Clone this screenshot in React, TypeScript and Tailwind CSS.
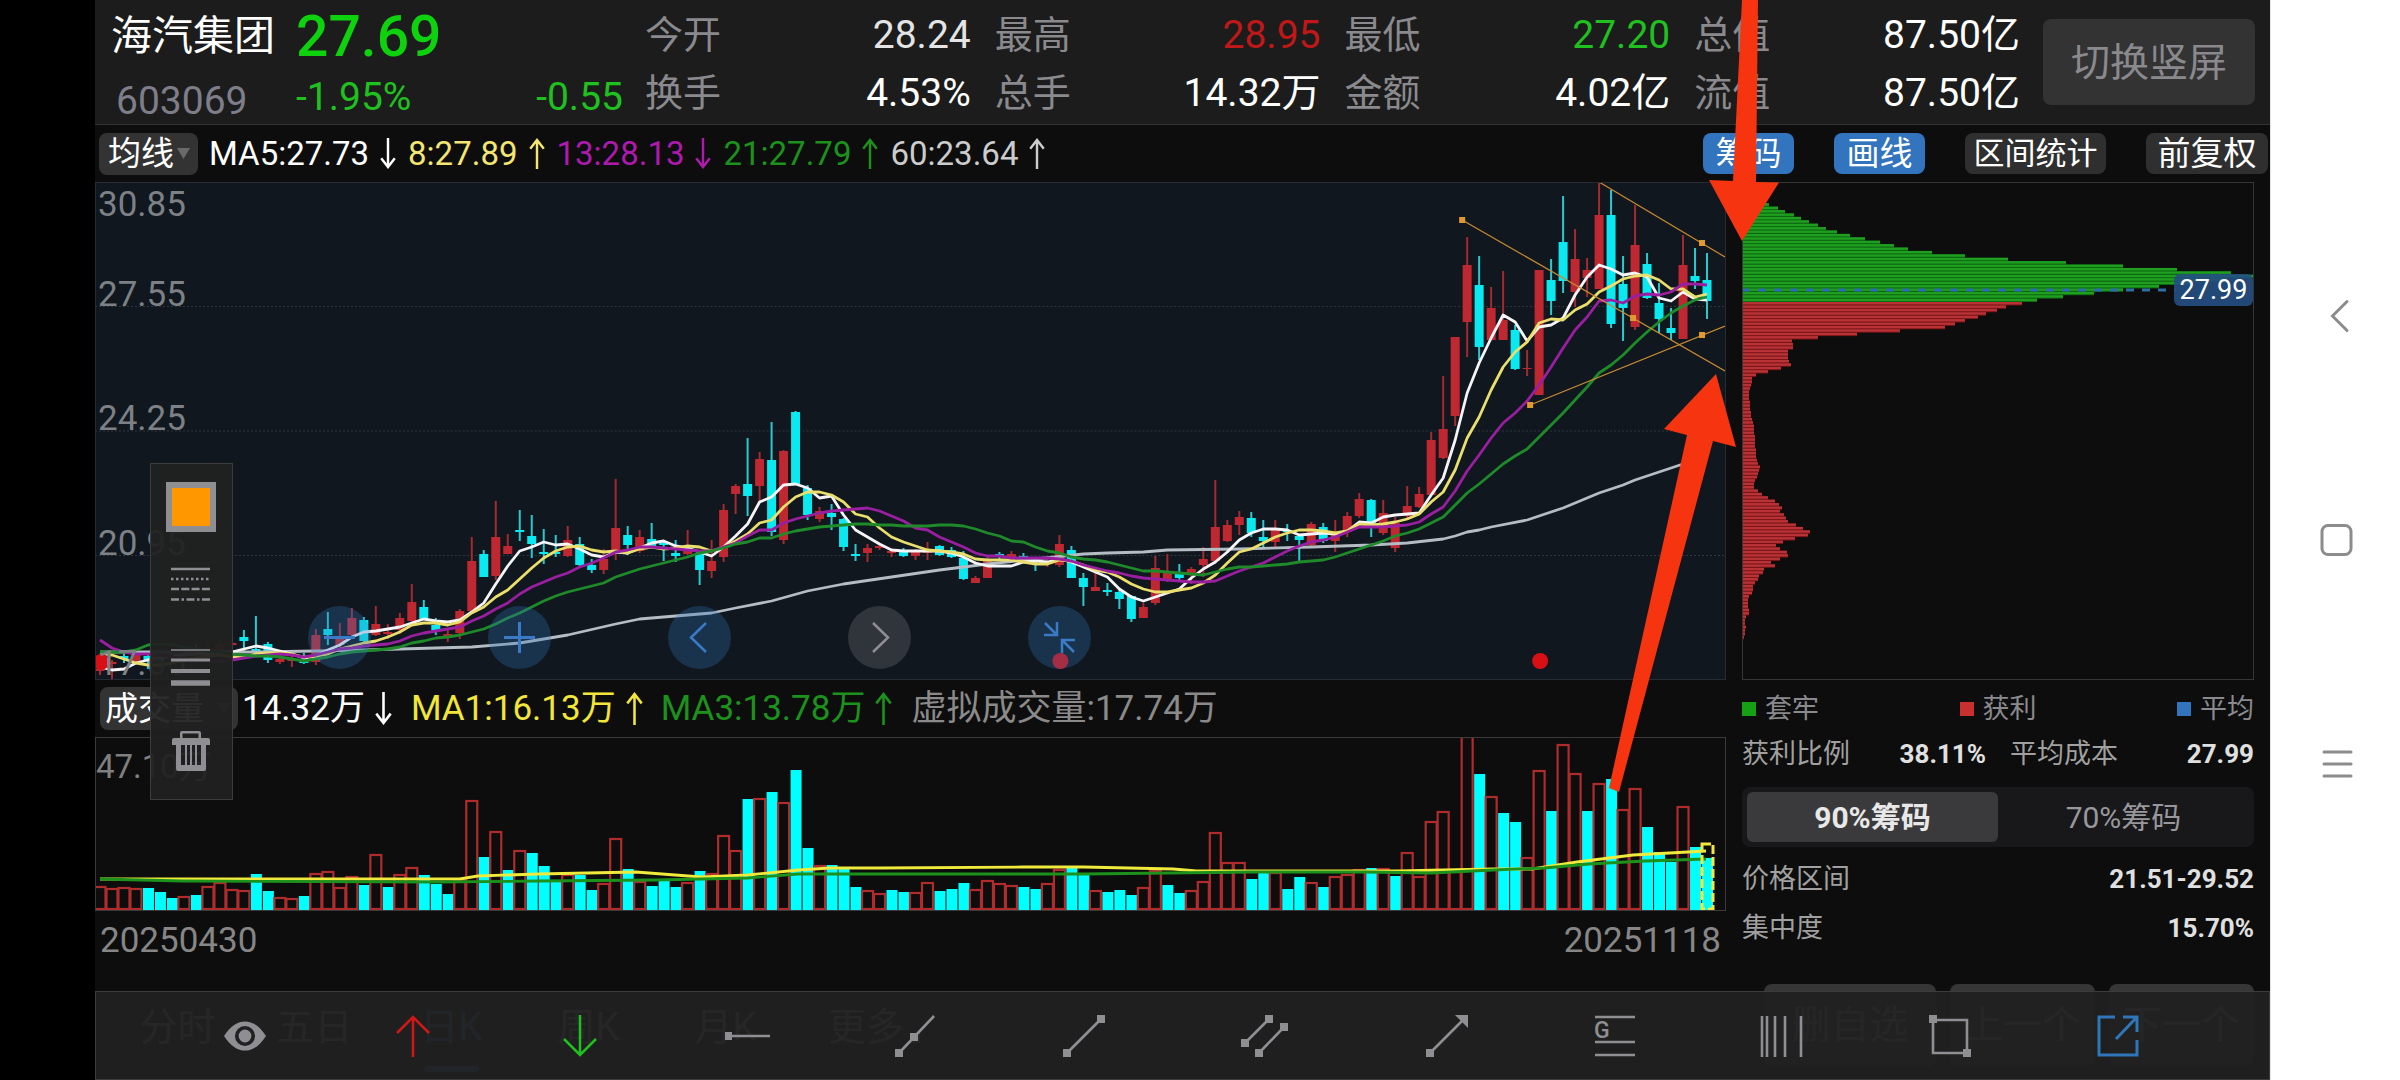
"use client";

import { useState } from "react";

interface Candle {
    up: boolean;
    high: number;
    top: number;
    bottom: number;
    low: number;
}

interface Quote {
    label: string;
    value: string;
    color: string;
}

// distance between two trading days on the x axis
const STEP = 12;
const FIRST_X = 5;

const UP = "#bf2830";
const DOWN = "#0be9f0";

// direction (1 up, 0 down), high, body top, body bottom, low
const candleRows: number[][] = [
    [1, 481, 487, 489, 493], [1, 478, 480, 482, 498], [0, 471, 474, 477, 481], [1, 470, 472, 480, 480], [0, 471, 474, 479, 487],
    [0, 470, 476, 480, 486], [1, 466, 470, 478, 480], [1, 464, 468, 474, 478], [0, 462, 466, 472, 480], [1, 460, 466, 474, 478],
    [1, 458, 462, 468, 470], [1, 457, 461, 463, 466], [0, 448, 455, 459, 471], [0, 434, 467, 469, 469], [0, 460, 462, 478, 481],
    [1, 473, 477, 480, 482], [1, 473, 477, 479, 485], [0, 471, 479, 481, 482], [1, 447, 453, 480, 483], [0, 430, 447, 453, 463],
    [1, 441, 454, 463, 465], [1, 426, 436, 453, 455], [0, 435, 438, 459, 460], [1, 424, 442, 453, 454], [1, 442, 450, 452, 457],
    [1, 431, 436, 448, 452], [1, 402, 420, 439, 440], [0, 418, 425, 437, 438], [0, 436, 443, 448, 453], [1, 448, 452, 454, 460],
    [1, 427, 429, 451, 457], [1, 355, 379, 429, 431], [0, 368, 372, 395, 395], [1, 319, 355, 394, 398], [1, 352, 364, 372, 372],
    [0, 328, 348, 350, 359], [0, 333, 354, 362, 376], [0, 347, 370, 372, 382], [0, 353, 370, 372, 375], [1, 344, 358, 374, 375],
    [0, 355, 362, 383, 385], [0, 377, 383, 388, 391], [1, 367, 377, 388, 392], [1, 297, 346, 368, 378], [0, 344, 353, 363, 373],
    [1, 348, 355, 369, 371], [0, 341, 357, 365, 366], [0, 359, 361, 363, 379], [0, 358, 371, 374, 380], [1, 348, 366, 372, 373],
    [0, 370, 371, 388, 403], [1, 358, 379, 389, 396], [1, 322, 328, 375, 380], [1, 302, 304, 312, 332], [0, 256, 302, 314, 334],
    [1, 270, 277, 304, 320], [0, 240, 278, 350, 354], [1, 268, 269, 358, 362], [0, 229, 230, 302, 302], [0, 303, 306, 333, 338],
    [1, 325, 329, 337, 340], [0, 322, 331, 335, 348], [0, 336, 337, 365, 369], [0, 362, 372, 374, 379], [1, 362, 366, 371, 380],
    [1, 361, 364, 366, 368], [1, 366, 369, 371, 375], [0, 366, 369, 374, 375], [1, 367, 369, 374, 378], [1, 360, 367, 371, 378],
    [0, 363, 364, 373, 374], [0, 365, 368, 375, 376], [0, 369, 376, 397, 398], [1, 394, 396, 401, 401], [1, 375, 378, 396, 396],
    [0, 370, 372, 374, 378], [1, 369, 372, 375, 378], [0, 371, 374, 376, 378], [0, 376, 378, 380, 389], [1, 376, 379, 381, 385],
    [1, 353, 362, 383, 385], [0, 364, 368, 396, 396], [0, 391, 396, 405, 424], [1, 391, 405, 409, 409], [0, 401, 408, 410, 414],
    [0, 407, 410, 417, 427], [0, 413, 414, 437, 440], [1, 421, 425, 436, 436], [1, 374, 386, 421, 423], [1, 372, 390, 399, 400],
    [0, 382, 390, 396, 398], [1, 385, 387, 391, 402], [1, 365, 377, 383, 395], [1, 298, 345, 379, 382], [1, 338, 343, 359, 360],
    [1, 329, 335, 343, 353], [0, 330, 336, 351, 355], [0, 338, 355, 359, 365], [1, 338, 348, 360, 366], [0, 342, 348, 350, 359],
    [0, 353, 354, 358, 379], [1, 340, 342, 363, 365], [0, 341, 345, 359, 361], [1, 338, 350, 359, 370], [1, 330, 334, 350, 355],
    [1, 311, 317, 334, 336], [0, 317, 318, 345, 355], [1, 318, 331, 351, 353], [1, 335, 341, 366, 370], [1, 304, 324, 334, 336],
    [1, 305, 312, 325, 326], [1, 250, 258, 313, 314], [1, 194, 247, 276, 277], [1, 155, 155, 234, 244], [1, 55, 83, 140, 175],
    [0, 74, 103, 165, 178], [1, 105, 126, 158, 159], [1, 89, 138, 158, 158], [0, 143, 148, 187, 188], [1, 168, 186, 187, 194],
    [1, 88, 88, 213, 213], [0, 77, 98, 119, 133], [0, 14, 60, 99, 111], [1, 47, 77, 110, 125], [1, 76, 88, 96, 115],
    [1, 0, 33, 107, 107], [0, 8, 33, 142, 146], [0, 74, 102, 126, 159], [1, 23, 63, 145, 148], [0, 71, 82, 116, 117],
    [0, 101, 121, 137, 151], [0, 126, 146, 151, 158], [1, 53, 83, 157, 157], [0, 66, 94, 99, 107], [0, 71, 98, 119, 137],
];

const candles: Candle[] = candleRows.map(([dir, high, top, bottom, low]) => ({
    up: dir === 1,
    high,
    top,
    bottom,
    low,
}));

const ma5 = [
    485, 488, 487, 481, 478, 476, 474, 473, 472, 471, 470, 470, 467, 464, 466, 469, 472, 476, 474, 468,
    463, 455, 450, 449, 447, 445, 441, 437, 439, 440, 438, 430, 421, 402, 384, 369, 365, 360, 363, 362,
    367, 373, 375, 370, 371, 366, 361, 359, 364, 366, 370, 374, 365, 354, 342, 320, 315, 303, 302, 306,
    316, 314, 333, 348, 355, 362, 368, 369, 369, 369, 369, 371, 375, 381, 384, 384, 384, 380, 379, 380,
    377, 380, 385, 390, 395, 407, 415, 419, 415, 411, 407, 396, 387, 380, 370, 358, 351, 347, 347, 348,
    353, 352, 351, 352, 349, 340, 341, 335, 333, 332, 331, 313, 296, 258, 211, 181, 156, 133, 140, 159,
    145, 143, 136, 113, 95, 83, 87, 93, 91, 95, 116, 119, 110, 117, 118,
];

const ma8 = [
    471, 473, 477, 481, 483, 483, 481, 478, 476, 474, 473, 475, 475, 472, 471, 471, 472, 475, 474, 472,
    467, 464, 461, 459, 455, 450, 443, 441, 441, 443, 440, 431, 425, 415, 408, 397, 386, 376, 369, 365,
    364, 368, 370, 369, 371, 367, 365, 367, 366, 364, 365, 369, 365, 359, 352, 341, 338, 325, 315, 310,
    310, 313, 320, 332, 335, 346, 355, 360, 364, 368, 369, 370, 372, 377, 378, 378, 378, 380, 382, 382,
    378, 379, 383, 388, 390, 395, 402, 407, 410, 410, 408, 406, 401, 393, 381, 370, 367, 361, 355, 351,
    348, 348, 349, 351, 349, 342, 343, 342, 340, 337, 332, 320, 310, 288, 256, 235, 208, 185, 170, 160,
    141, 137, 138, 128, 122, 110, 104, 97, 94, 93, 98, 107, 107, 115, 112,
];

const ma13 = [
    458, 466, 470, 472, 472, 473, 475, 477, 478, 479, 479, 478, 476, 474, 473, 472, 473, 475, 473, 470,
    467, 466, 464, 463, 462, 459, 454, 451, 449, 447, 445, 439, 434, 427, 421, 412, 405, 400, 395, 391,
    385, 381, 376, 370, 368, 365, 365, 366, 367, 368, 369, 369, 365, 361, 354, 348, 348, 341, 337, 334,
    331, 329, 328, 327, 326, 329, 334, 339, 346, 348, 355, 360, 365, 371, 374, 374, 376, 376, 376, 376,
    377, 379, 383, 386, 389, 391, 394, 396, 397, 398, 399, 400, 400, 399, 394, 389, 385, 381, 375, 369,
    364, 360, 358, 355, 350, 345, 345, 345, 344, 343, 340, 332, 325, 309, 289, 273, 256, 241, 231, 219,
    203, 185, 166, 148, 135, 119, 118, 121, 114, 112, 113, 110, 102, 102, 103,
];

const ma21 = [
    470, 470, 470, 468, 463, 462, 463, 465, 467, 469, 470, 472, 473, 474, 474, 475, 477, 479, 477, 475,
    472, 470, 469, 468, 467, 465, 461, 459, 456, 455, 453, 450, 447, 442, 436, 431, 425, 419, 414, 410,
    407, 404, 401, 395, 391, 387, 384, 381, 378, 375, 371, 369, 366, 362, 360, 356, 356, 352, 349, 347,
    345, 344, 343, 342, 342, 343, 343, 344, 344, 344, 343, 343, 344, 347, 351, 354, 359, 360, 365, 369,
    371, 375, 377, 378, 380, 383, 386, 389, 389, 390, 391, 392, 393, 390, 387, 385, 385, 384, 383, 382,
    380, 379, 378, 375, 371, 367, 363, 359, 354, 351, 347, 341, 335, 323, 311, 302, 292, 282, 274, 267,
    255, 243, 231, 218, 205, 191, 183, 173, 161, 150, 140, 131, 124, 118, 115,
];

// the slow average only needs its turning points: [day, y]
const ma60: number[][] = [
    [0, 470], [13, 470], [18, 469], [22, 468], [28, 466], [31, 465], [35, 461], [39, 453], [43, 442], [45, 437],
    [48, 434], [51, 431], [53, 426], [56, 419], [59, 409], [62, 402], [66, 395], [70, 388], [74, 382], [78, 377],
    [82, 372], [84, 371], [87, 370], [89, 368], [95, 367], [101, 365], [106, 363], [109, 361], [112, 357], [113, 354],
    [114, 350], [115, 348], [116, 345], [119, 338], [122, 326], [125, 311], [127, 303], [128, 298], [131, 286], [132, 282],
    [134, 274],
];

// bar heights, negative on falling days
const volumes = [
    23, 21, 22, 21, -22, -18, -12, 13, -15, 23, 27, 20, 19, -36, -19, 12, 11, -14, 36, 38,
    22, 33, -25, 55, -23, 35, 42, -35, -26, -16, 30, 109, -53, 78, -40, 59, -57, -44, -28, 35,
    -35, -20, 26, 71, -41, 28, -24, -29, -23, 27, -39, 36, 74, 59, -111, 111, -118, 107, -140, -62,
    44, -45, -42, -23, 19, 16, -20, -18, 17, 27, -19, -21, -27, 20, 29, 26, 24, -23, -21, 26,
    40, -42, -36, 19, -18, -20, -15, 22, 39, -25, -17, 19, 28, 77, 47, 47, -31, -40, 37, -21,
    -33, 27, -23, 33, 35, 40, -42, 41, -34, 57, 33, 88, 98, 38, 173, -136, 113, -97, -88, 52,
    139, -99, 165, 136, -99, 126, -131, 100, 121, -83, -58, -48, 103, -63, -52,
];

const chipsAbove = [
    3, 6, 10, 15, 20, 27, 36, 43, 52, 59, 67, 76, 84, 95, 108, 123, 138, 152, 166, 190, 223, 266, 324, 381, 435, 489,
    511, 485, 450, 417, 381, 352, 321, 295,
];

const chipsBelow = [
    280, 264, 255, 244, 236, 223, 213, 203, 158, 115, 76, 50, 51, 51, 46, 46, 46, 47, 49, 39, 26, 14, 10, 10, 9, 8,
    7, 7, 7, 8, 8, 8, 9, 9, 10, 11, 12, 12, 12, 13, 13, 13, 13, 14, 14, 14, 15, 16, 18, 17, 16, 15, 13, 12, 12, 16,
    20, 26, 33, 37, 40, 38, 42, 44, 46, 54, 61, 68, 66, 53, 41, 34, 38, 45, 46, 38, 29, 33, 22, 21, 17, 16, 13, 11,
    11, 10, 7, 6, 6, 6, 7, 7, 4, 3, 3, 4, 3, 3, 2, 1, 1, 1, 1, 1, 1,
];

const quotes: Quote[][] = [
    [
        { label: "今开", value: "28.24", color: "text-[#e4e4e4]" },
        { label: "换手", value: "4.53%", color: "text-white" },
    ],
    [
        { label: "最高", value: "28.95", color: "text-[#c01818]" },
        { label: "总手", value: "14.32万", color: "text-white" },
    ],
    [
        { label: "最低", value: "27.20", color: "text-[#1fc01f]" },
        { label: "金额", value: "4.02亿", color: "text-white" },
    ],
    [
        { label: "总值", value: "87.50亿", color: "text-white" },
        { label: "流值", value: "87.50亿", color: "text-white" },
    ],
];

const averages = [
    { text: "MA5:27.73", up: false, color: "text-white" },
    { text: "8:27.89", up: true, color: "text-[#f4e670]" },
    { text: "13:28.13", up: false, color: "text-[#ae1aae]" },
    { text: "21:27.79", up: true, color: "text-[#1c921c]" },
    { text: "60:23.64", up: true, color: "text-[#cccccc]" },
];

const priceLabels = [
    { text: "30.85", pos: "top-1" },
    { text: "27.55", pos: "top-[94px]" },
    { text: "24.25", pos: "top-[218px]" },
    { text: "20.95", pos: "top-[343px]" },
    { text: "17.65", pos: "top-[463px]" },
];

const dayX = (day: number) => FIRST_X + day * STEP;

const toPoints = (values: number[]) => values.map((y, day) => `${dayX(day)},${y}`).join(" ");

const TrendArrow = ({ up, tall }: { up: boolean; tall?: boolean }) => (
    <svg viewBox="0 0 16 32" className={tall ? "w-[17px] h-[33px]" : "w-4 h-[31px]"} fill="none" stroke="currentColor" strokeWidth="2.5">
        {up ? <path d="M8 32V2M1 11L8 2l7 9" /> : <path d="M8 0v30M1 21l7 9 7-9" />}
    </svg>
);

const Triangle = ({ className }: { className: string }) => (
    <svg viewBox="0 0 13 11" className={className}>
        <path d="M0 0h13L6.5 11z" fill="currentColor" />
    </svg>
);

const PriceChart = () => (
    <svg viewBox="1 1 1630 496" preserveAspectRatio="none" className="block w-full h-full">
        {[124.5, 249, 373.5].map((y) => (
            <line key={y} x1="0" x2="1632" y1={y} y2={y} stroke="#2f373f" strokeWidth="1.2" strokeDasharray="2 2" />
        ))}
        {candles.map((c, i) => (
            <g key={i}>
                <rect x={dayX(i) - 1} y={c.high} width="2" height={c.low - c.high} fill={c.up ? "#a42a30" : "#2cc8d0"} />
                <rect x={dayX(i) - 4.5} y={c.top} width="9" height={Math.max(c.bottom - c.top, 1)} fill={c.up ? UP : DOWN} />
            </g>
        ))}
        <g fill="none" strokeWidth="2.8" strokeLinejoin="round">
            <polyline points={ma60.map(([day, y]) => `${dayX(day)},${y}`).join(" ")} stroke="#b4bcc4" />
            <polyline points={toPoints(ma5)} stroke="#f5f5f8" />
            <polyline points={toPoints(ma8)} stroke="#eadf6c" />
            <polyline points={toPoints(ma13)} stroke="#9a1fa0" />
            <polyline points={toPoints(ma21)} stroke="#1f8a2a" />
        </g>
        <g stroke="#c98a34" strokeWidth="1.2">
            <line x1="1505" y1="0" x2="1631" y2="75" />
            <line x1="1368" y1="38" x2="1631" y2="189" />
            <line x1="1436" y1="223" x2="1631" y2="144" />
        </g>
        <g fill="#e09830">
            <rect x="1365" y="35" width="6" height="6" />
            <rect x="1605" y="58" width="6" height="6" />
            <rect x="1536" y="133" width="6" height="6" />
            <rect x="1433" y="220" width="6" height="6" />
            <rect x="1605" y="150" width="6" height="6" />
        </g>
        <g fill="#d80f14">
            <circle cx="6" cy="480" r="8" />
            <circle cx="966" cy="479" r="8" />
            <circle cx="1446" cy="479" r="8" />
        </g>
    </svg>
);

const VolumeChart = () => (
    <svg viewBox="1 1 1630 172" preserveAspectRatio="none" className="block w-full h-full">
        {volumes.map((v, i) =>
            v > 0 ? (
                <rect key={i} x={dayX(i) - 5.5} y={173 - v} width="11" height={v - 1} fill="none" stroke="#b02c2c" strokeWidth="2.2" />
            ) : (
                <rect key={i} x={dayX(i) - 5} y={173 + v} width="11" height={-v} fill="#00ffff" />
            )
        )}
        <polyline
            points="5,142 255,142 365,142 383,139 444,137 541,135 607,140 653,138 704,133 735,131 785,131 928,130 989,130 1079,132 1102,134 1169,134 1304,134 1349,133 1399,132 1438,132 1483,125 1539,118 1612,114"
            fill="none"
            stroke="#f0ea3c"
            strokeWidth="2.8"
        />
        <polyline
            points="5,142 87,144 342,145 444,144 562,143 653,141 704,137 785,137 989,137 1158,135 1270,135 1337,136 1399,133 1450,131 1495,127 1551,124 1612,122"
            fill="none"
            stroke="#1c921c"
            strokeWidth="2.8"
        />
        <rect x="1608" y="107" width="11" height="65" fill="none" stroke="#f2e640" strokeWidth="3" strokeDasharray="9 3" />
    </svg>
);

const ChipChart = () => {
    const rows = [...chipsAbove, ...chipsBelow];
    return (
        <svg viewBox="1 1 510 496" preserveAspectRatio="none" className="block w-full h-full">
            {rows.map((w, i) => {
                const above = i < chipsAbove.length;
                const y = 4.2 + i * 3.407;
                return (
                    <g key={i}>
                        <rect x="0" y={y} width={w} height="3.4" fill={above ? "#0d6a10" : "#7c1418"} />
                        <rect x="0" y={y} width={w} height="2.4" fill={above ? "#1f9f20" : "#b93236"} />
                    </g>
                );
            })}
            <line x1="0" x2="434" y1="108" y2="108" stroke="#2c6ea6" strokeWidth="3" strokeDasharray="8 8" />
        </svg>
    );
};

const drawTools = [
    { id: "horizontal", icon: <g><rect x="-2" y="17" width="7" height="8" fill="currentColor" stroke="none" /><path d="M4 21h39" /></g> },
    { id: "ray", icon: <g><path d="M4 38L39 1" /><rect x="0" y="34" width="8" height="8" fill="currentColor" stroke="none" /><rect x="15" y="18" width="8" height="8" fill="currentColor" stroke="none" /></g> },
    { id: "segment", icon: <g><path d="M4 38L38 4" /><rect x="0" y="34" width="8" height="8" fill="currentColor" stroke="none" /><rect x="34" y="0" width="8" height="8" fill="currentColor" stroke="none" /></g> },
    {
        id: "channel",
        wide: true,
        icon: (
            <g>
                <path d="M1 28L25 4M15 38L40 12" />
                <g fill="currentColor" stroke="none">
                    <rect x="-3" y="24" width="8" height="8" />
                    <rect x="21" y="0" width="8" height="8" />
                    <rect x="11" y="34" width="8" height="8" />
                    <rect x="36" y="8" width="8" height="8" />
                </g>
            </g>
        ),
    },
    { id: "arrow", icon: <g><path d="M4 38L36 6" /><rect x="0" y="34" width="8" height="8" fill="currentColor" stroke="none" /><path d="M29 0h13v13z" fill="currentColor" stroke="none" /></g> },
    {
        id: "golden",
        icon: (
            <g>
                <path d="M1 2h40M1 27h40M1 40h40" />
                <text x="0" y="23" fontSize="23" fontWeight="500" fill="currentColor" stroke="none">G</text>
            </g>
        ),
    },
    { id: "period", icon: <path d="M1 1v41M6 1v41M14 1v41M24 1v41M40 1v41" /> },
    { id: "box", icon: <g><path d="M4 5h34v33H4z" /><rect x="0" y="0" width="8" height="8" fill="currentColor" stroke="none" /><rect x="34" y="34" width="8" height="8" fill="currentColor" stroke="none" /></g> },
];

const App: React.FC = () => {
    const [range, setRange] = useState("90");

    return (
        <div className="flex min-h-screen bg-black font-['Roboto','Noto_Sans_CJK_SC',sans-serif]">
            <main className="relative flex flex-col flex-1 min-w-0 ml-[95px] overflow-hidden bg-[#0d0d0d]">
                <header className="flex h-[125px] shrink-0 pl-4 pr-[15px] bg-[#1c1c1c] border-b border-[#333333]">
                    <div className="w-[185px] shrink-0">
                        <h1 className="h-[70px] leading-[72px] text-[41px] text-white">海汽集团</h1>
                        <p className="h-[54px] pl-[5px] leading-[62px] text-[39px] text-[#7e7e8a]">603069</p>
                    </div>
                    <div className="w-[327px] shrink-0">
                        <p className="h-[70px] leading-[74px] text-[57px] font-medium text-[#0fd20f]">27.69</p>
                        <p className="flex justify-between h-[54px] leading-[54px] text-[39px] text-[#1fc01f]">
                            <span>-1.95%</span>
                            <span>-0.55</span>
                        </p>
                    </div>
                    <div className="grid flex-1 grid-cols-4 gap-x-6 pl-[22px] pt-[6px]">
                        {quotes.map((column, i) => (
                            <dl key={i} className="text-[38px]">
                                {column.map((q) => (
                                    <div key={q.label} className="flex justify-between h-[58px] leading-[58px]">
                                        <dt className="text-[#8a8a8e]">{q.label}</dt>
                                        <dd className={`text-[39px] ${q.color}`}>{q.value}</dd>
                                    </div>
                                ))}
                            </dl>
                        ))}
                    </div>
                    <button className="w-[212px] h-[86px] mt-[19px] ml-[23px] pt-[2px] shrink-0 rounded-lg bg-[#333333] text-[39px] text-[#8a8a8e]">
                        切换竖屏
                    </button>
                </header>

                <div className="flex items-center h-[57px] shrink-0 pl-1 pr-[2px] text-[33px] leading-[42px]">
                    <div className="flex items-center w-[99px] h-[42px] pl-[9px] rounded-lg bg-[#333333]">
                        <select aria-label="均线" className="w-[69px] appearance-none bg-transparent text-white">
                            <option>均线</option>
                        </select>
                        <Triangle className="w-[13px] h-[11px] text-[#6a6a6a]" />
                    </div>
                    <div className="flex items-center gap-[12px] ml-[11px]">
                        {averages.map((a) => (
                            <p key={a.text} className={`flex items-center gap-[11px] ${a.color}`}>
                                <span>{a.text}</span>
                                <TrendArrow up={a.up} />
                            </p>
                        ))}
                    </div>
                    <div className="flex gap-10 ml-auto text-white">
                        <button className="w-[91px] h-[41px] rounded-lg bg-[#3274be]">筹码</button>
                        <button className="w-[91px] h-[41px] rounded-lg bg-[#3274be]">画线</button>
                        <button className="w-[141px] h-[41px] rounded-lg bg-[#2f2f2f] text-[31px]">区间统计</button>
                        <button className="w-[122px] h-[41px] rounded-lg bg-[#2f2f2f]">前复权</button>
                    </div>
                </div>

                <div className="flex gap-4 pr-4">
                    <section className="relative flex-1 min-w-0">
                        <div className="relative h-[498px] border border-[#252c34] bg-[#10171e]">
                            <div className="text-[35px] leading-9 text-[#7d8186]">
                                {priceLabels.map((p) => (
                                    <span key={p.text} className={`absolute left-[2px] ${p.pos}`}>{p.text}</span>
                                ))}
                            </div>
                            <PriceChart />
                            <div className="absolute left-[212px] bottom-[10px] flex gap-[117px] text-[#3b7ac6]">
                                <button aria-label="缩小" className="size-[63px] rounded-full bg-[#3274be]/30">
                                    <svg viewBox="0 0 63 63" fill="none" stroke="currentColor" strokeWidth="3"><path d="M16 31.500H47" /></svg>
                                </button>
                                <button aria-label="放大" className="size-[63px] rounded-full bg-[#3274be]/30">
                                    <svg viewBox="0 0 63 63" fill="none" stroke="currentColor" strokeWidth="3"><path d="M16 31.500H47M31.500 16V47" /></svg>
                                </button>
                                <button aria-label="左移" className="size-[63px] rounded-full bg-[#3274be]/30">
                                    <svg viewBox="0 0 63 63" fill="none" stroke="currentColor" strokeWidth="2.5"><path d="M38 17L23 31.500L38 46" /></svg>
                                </button>
                                <button aria-label="右移" className="size-[63px] rounded-full bg-[#8e8e93]/25 text-[#8e8e93]">
                                    <svg viewBox="0 0 63 63" fill="none" stroke="currentColor" strokeWidth="2.5"><path d="M25 17L40 31.500L25 46" /></svg>
                                </button>
                                <button aria-label="收起" className="size-[63px] rounded-full bg-[#3274be]/30">
                                    <svg viewBox="0 0 63 63" fill="none" stroke="currentColor" strokeWidth="2.5">
                                        <path d="M17 17L29 29M29 16V29H16M46 46L34 34M34 47V34H47" />
                                    </svg>
                                </button>
                            </div>
                        </div>

                        <div className="flex items-center h-[57px] pl-[5px] text-[35px] leading-[42px]">
                            <div className="flex items-center w-[138px] h-[43px] pl-[5px] rounded-lg bg-[#333333]">
                                <select aria-label="成交量" className="w-[112px] appearance-none bg-transparent text-[33px] text-white">
                                    <option>成交量</option>
                                </select>
                                <Triangle className="w-[13px] h-[11px] text-[#6a6a6a]" />
                            </div>
                            <p className="flex items-center gap-[10px] ml-1 text-white">
                                14.32万 <TrendArrow up={false} tall />
                            </p>
                            <p className="flex items-center gap-[10px] ml-[19px] text-[#f2e63a]">
                                MA1:16.13万 <TrendArrow up tall />
                            </p>
                            <p className="flex items-center gap-[10px] ml-[18px] text-[#1c921c]">
                                MA3:13.78万 <TrendArrow up tall />
                            </p>
                            <p className="ml-[19px] text-[#8a8a8a]">虚拟成交量:17.74万</p>
                        </div>

                        <div className="relative h-[174px] border border-[#3a3a3a]">
                            <span className="absolute left-0 top-[11px] text-[33px] leading-9 text-[#808080]">47.10万</span>
                            <VolumeChart />
                        </div>
                        <div className="flex justify-between px-[5px] text-[35px] leading-[60px] text-[#868686]">
                            <time>20250430</time>
                            <time>20251118</time>
                        </div>

                        <div className="absolute left-[55px] top-[281px] flex flex-col items-center w-[83px] h-[337px] pt-[18px] pr-[2px] border border-[#3c3c3c] bg-[#212121]/95 text-[#8e8e93]">
                            <button aria-label="颜色" className="size-[50px] border-[6px] border-[#8e8e93] bg-[#ff9800]" />
                            <button aria-label="线型" className="mt-[34px]">
                                <svg viewBox="0 0 39 36" className="w-[39px] h-9" stroke="currentColor" strokeWidth="2.600">
                                    <path d="M0 3H39" />
                                    <path d="M0 13H39" strokeDasharray="2.500 2.500" />
                                    <path d="M0 23H39" strokeDasharray="8 2.300" />
                                    <path d="M0 33.500H39" strokeDasharray="8 2.500 2.500 2.500" />
                                </svg>
                            </button>
                            <button aria-label="线宽" className="mt-[45px]">
                                <svg viewBox="0 0 39 40" className="w-[39px] h-10" stroke="currentColor">
                                    <path d="M0 3H39" strokeWidth="1.500" />
                                    <path d="M0 13H39" strokeWidth="3" />
                                    <path d="M0 24H39" strokeWidth="4" />
                                    <path d="M0 36H39" strokeWidth="5.500" />
                                </svg>
                            </button>
                            <button aria-label="删除" className="mt-11">
                                <svg viewBox="0 0 38 40" className="w-[38px] h-10" fill="currentColor">
                                    <path d="M8 7V2a2 2 0 0 1 2-2h17a2 2 0 0 1 2 2v5h7a2 2 0 0 1 2 2v5h-4v24a2 2 0 0 1-2 2H6a2 2 0 0 1-2-2V14H0V9a2 2 0 0 1 2-2zM10.500 7h16V2.500h-16zM9 14v20h4V14zM15 14v20h3V14zM20 14v20h3V14zM25 14v20h4V14z" fillRule="evenodd" />
                                </svg>
                            </button>
                        </div>
                    </section>

                    <aside className="w-[512px] shrink-0 text-[27px]">
                        <div className="relative h-[498px] border border-[#363636]">
                            <ChipChart />
                            <span className="absolute right-0 top-[91px] w-[79px] h-8 rounded-md bg-[#244f82]/90 text-center text-[27px] leading-8 text-white">
                                27.99
                            </span>
                        </div>
                        <ul className="flex justify-between mt-[9px] leading-10 text-[#8a8a8e]">
                            <li className="flex items-center gap-[9px]"><i className="size-[14px] bg-[#16a016]" />套牢</li>
                            <li className="flex items-center gap-[9px]"><i className="size-[14px] bg-[#c83030]" />获利</li>
                            <li className="flex items-center gap-[9px]"><i className="size-[14px] bg-[#3274be]" />平均</li>
                        </ul>
                        <div className="flex justify-between mt-[5px] leading-10 text-[#a0a0a0]">
                            <p className="flex justify-between w-[244px]">获利比例 <b className="text-[26px] text-[#e0e0e0]">38.11%</b></p>
                            <p className="flex justify-between w-[244px]">平均成本 <b className="text-[26px] text-[#e0e0e0]">27.99</b></p>
                        </div>
                        <div className="flex h-[60px] mt-[13px] p-[5px] rounded-lg bg-[#18181a] text-[30px]">
                            <button
                                onClick={() => setRange("90")}
                                className={range === "90" ? "flex-1 rounded-md bg-[#3a3a3c] font-bold text-[#e8e8e8]" : "flex-1 text-[#98989c]"}
                            >
                                90%筹码
                            </button>
                            <button
                                onClick={() => setRange("70")}
                                className={range === "70" ? "flex-1 rounded-md bg-[#3a3a3c] font-bold text-[#e8e8e8]" : "flex-1 text-[#98989c]"}
                            >
                                70%筹码
                            </button>
                        </div>
                        <p className="flex justify-between mt-2 leading-[49px] text-[#a0a0a0]">价格区间 <b className="text-[26px] text-[#e0e0e0]">21.51-29.52</b></p>
                        <p className="flex justify-between leading-[49px] text-[#a0a0a0]">集中度 <b className="text-[26px] text-[#e0e0e0]">15.70%</b></p>
                        <div className="flex gap-[14px] mt-[31px] pl-[22px] text-[39px] text-[#8a8a8e]">
                            <button className="w-[172px] h-[82px] rounded-lg bg-[#363636]">删自选</button>
                            <button className="flex-1 h-[82px] rounded-lg bg-[#363636]">上一个</button>
                            <button className="flex-1 h-[82px] rounded-lg bg-[#363636]">下一个</button>
                        </div>
                    </aside>
                </div>

                <nav className="absolute left-[14px] bottom-0 flex h-[88px] text-[38px] text-[#8a8a8e]">
                    <a href="#time" className="w-[137px] text-center leading-[70px]">分时</a>
                    <a href="#five" className="w-[137px] text-center leading-[70px]">五日</a>
                    <a href="#day" className="flex flex-col items-center w-[137px] leading-[70px] text-[#3274be]">
                        日K
                        <i className="w-[55px] h-[6px] mt-1 rounded-full bg-[#3274be]" />
                    </a>
                    <a href="#week" className="w-[137px] text-center leading-[70px]">周K</a>
                    <a href="#month" className="w-[137px] text-center leading-[70px]">月K</a>
                    <a href="#more" className="flex items-center w-[160px] h-[70px] pl-[34px] gap-1">
                        更多
                        <svg viewBox="0 0 12 12" className="size-3 mt-5"><path d="M12 0v12H0z" fill="currentColor" /></svg>
                    </a>
                </nav>

                <div className="absolute inset-x-0 bottom-0 flex items-center justify-between h-[89px] pl-[128px] pr-[130px] border border-[#3c3c3c] bg-[#212121]/95 text-[#8e8e93]">
                    <button aria-label="显示">
                        <svg viewBox="0 0 46 46" className="w-[42px] h-[42px] overflow-visible">
                            <path d="M0 23C7 12 15 7 23 7s16 5 23 16C39 34 31 39 23 39S7 34 0 23z" fill="currentColor" />
                            <circle cx="23" cy="23" r="9" fill="none" stroke="#212121" strokeWidth="4" />
                        </svg>
                    </button>
                    <button aria-label="看涨">
                        <svg viewBox="0 0 42 42" className="w-[42px] h-[42px]" fill="none" stroke="#d01818" strokeWidth="2.5"><path d="M21 42V2M5 18L21 2l16 16" /></svg>
                    </button>
                    <button aria-label="看跌">
                        <svg viewBox="0 0 42 42" className="w-[42px] h-[42px]" fill="none" stroke="#1fc01f" strokeWidth="2.5"><path d="M21 0v40M5 24l16 16 16-16" /></svg>
                    </button>
                    {drawTools.map((tool) => (
                        <button key={tool.id} aria-label={tool.id} className={tool.wide ? "flex justify-center w-[70px]" : ""}>
                            <svg viewBox="0 0 42 42" className="w-[42px] h-[42px] overflow-visible" fill="none" stroke="currentColor" strokeWidth="2.6">
                                {tool.icon}
                            </svg>
                        </button>
                    ))}
                    <button aria-label="退出" className="text-[#2f76b8]">
                        <svg viewBox="0 0 42 42" className="w-[42px] h-[42px]" fill="none" stroke="currentColor" strokeWidth="3">
                            <path d="M18 2H2v38h38V25M26 2h14v15M40 2L19 24" />
                        </svg>
                    </button>
                </div>

                <svg viewBox="0 0 2175 1080" preserveAspectRatio="none" className="absolute inset-0 w-full h-full pointer-events-none" fill="#f63510">
                    <path d="M1647 0L1638 181L1614 180L1647 241L1684 182.500L1661 182L1663 0z" />
                    <path d="M1621 374L1569 429L1592 435L1514 788L1524 792L1618 441L1641 447z" />
                </svg>
            </main>

            <nav className="relative w-[130px] shrink-0 border-l border-[#e4e4e4] bg-white text-[#8c8c8c]">
                <div className="flex flex-col items-center justify-between h-[492px] mt-[294px]">
                    <button aria-label="返回">
                        <svg viewBox="0 0 44 44" className="size-11" fill="none" stroke="currentColor" strokeWidth="3" strokeLinecap="round"><path d="M33 7.500L18.500 22L33 36.500" /></svg>
                    </button>
                    <button aria-label="主页">
                        <svg viewBox="0 0 44 44" className="size-11" fill="none" stroke="currentColor" strokeWidth="3"><rect x="8" y="7.500" width="29" height="29" rx="6" /></svg>
                    </button>
                    <button aria-label="任务">
                        <svg viewBox="0 0 44 44" className="size-11" fill="none" stroke="currentColor" strokeWidth="3" strokeLinecap="round"><path d="M10 10H37M10 22H37M10 34H37" /></svg>
                    </button>
                </div>
            </nav>
        </div>
    );
};

export default App;
